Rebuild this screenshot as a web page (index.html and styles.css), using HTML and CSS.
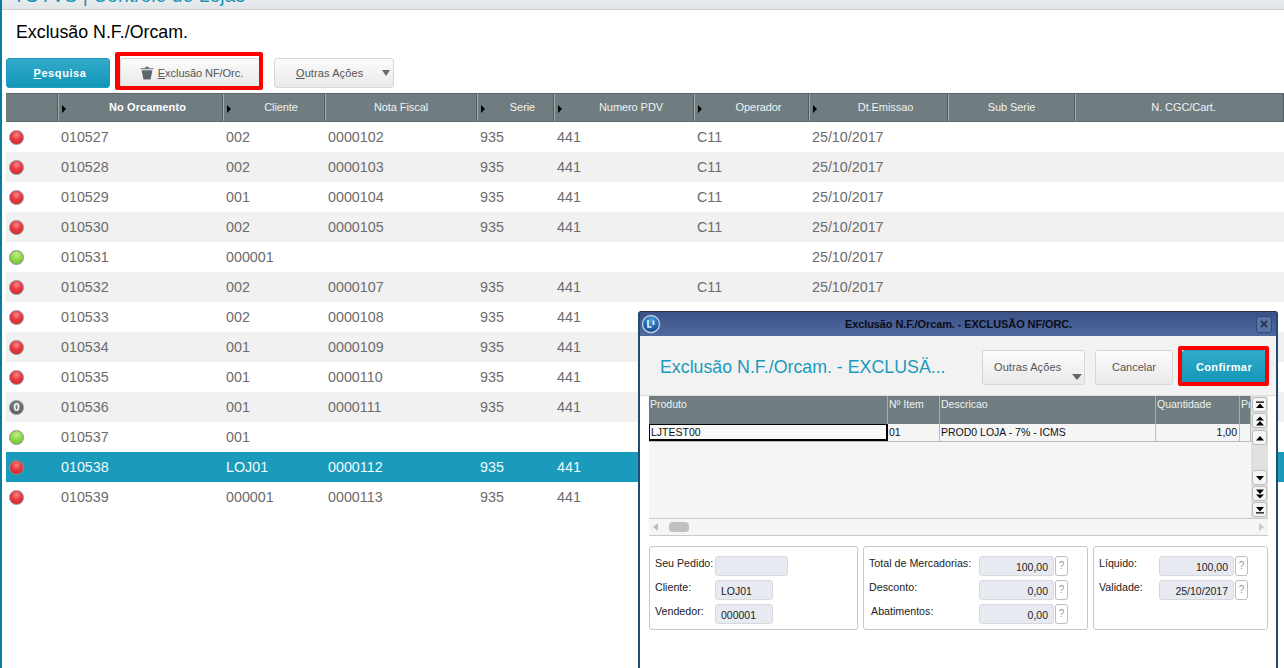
FILE: index.html
```html
<!DOCTYPE html>
<html lang="pt">
<head>
<meta charset="utf-8">
<title>Exclusão N.F./Orcam.</title>
<link rel="stylesheet" href="styles.css">
</head>
<body>
<div class="app">
  <div class="topbar"><span class="brand">TOTVS | Controle de Lojas</span></div>
  <main class="content">
    <h1 class="page-title">Exclusão N.F./Orcam.</h1>
    <div class="toolbar">
      <button class="btn btn-primary btn-search"><u>P</u>esquisa</button>
      <button class="btn btn-delete highlighted">
        <svg class="trash" viewBox="0 0 14 14" width="14" height="14"><path d="M0.5 2.2 L5 2.2 L5.4 0.8 L8.6 0.8 L9 2.2 L13.5 2.2 L13.5 3.2 L0.5 3.2 Z" fill="#6d7376"/><path d="M1.6 4.2 L12.4 4.2 L10.6 13.4 L3.4 13.4 Z" fill="#5f666a"/></svg>
        <span><u>E</u>xclusão NF/Orc.</span>
      </button>
      <button class="btn btn-more"><span><u>O</u>utras Ações</span><i class="caret"></i></button>
    </div>
    <div class="grid">
      <div class="row head">
        <div class="h"></div>
        <div class="h arrow strong">No Orcamento</div>
        <div class="h arrow">Cliente</div>
        <div class="h">Nota Fiscal</div>
        <div class="h arrow">Serie</div>
        <div class="h arrow">Numero PDV</div>
        <div class="h arrow">Operador</div>
        <div class="h arrow">Dt.Emissao</div>
        <div class="h">Sub Serie</div>
        <div class="h h-last">N. CGC/Cart.</div>
      </div>
      <div class="row"><div class="c"><i class="dot red"></i></div><div class="c">010527</div><div class="c">002</div><div class="c">0000102</div><div class="c">935</div><div class="c">441</div><div class="c">C11</div><div class="c">25/10/2017</div></div>
      <div class="row"><div class="c"><i class="dot red"></i></div><div class="c">010528</div><div class="c">002</div><div class="c">0000103</div><div class="c">935</div><div class="c">441</div><div class="c">C11</div><div class="c">25/10/2017</div></div>
      <div class="row"><div class="c"><i class="dot red"></i></div><div class="c">010529</div><div class="c">001</div><div class="c">0000104</div><div class="c">935</div><div class="c">441</div><div class="c">C11</div><div class="c">25/10/2017</div></div>
      <div class="row"><div class="c"><i class="dot red"></i></div><div class="c">010530</div><div class="c">002</div><div class="c">0000105</div><div class="c">935</div><div class="c">441</div><div class="c">C11</div><div class="c">25/10/2017</div></div>
      <div class="row"><div class="c"><i class="dot green"></i></div><div class="c">010531</div><div class="c">000001</div><div class="c"></div><div class="c"></div><div class="c"></div><div class="c"></div><div class="c">25/10/2017</div></div>
      <div class="row"><div class="c"><i class="dot red"></i></div><div class="c">010532</div><div class="c">002</div><div class="c">0000107</div><div class="c">935</div><div class="c">441</div><div class="c">C11</div><div class="c">25/10/2017</div></div>
      <div class="row"><div class="c"><i class="dot red"></i></div><div class="c">010533</div><div class="c">002</div><div class="c">0000108</div><div class="c">935</div><div class="c">441</div></div>
      <div class="row"><div class="c"><i class="dot red"></i></div><div class="c">010534</div><div class="c">001</div><div class="c">0000109</div><div class="c">935</div><div class="c">441</div></div>
      <div class="row"><div class="c"><i class="dot red"></i></div><div class="c">010535</div><div class="c">001</div><div class="c">0000110</div><div class="c">935</div><div class="c">441</div></div>
      <div class="row"><div class="c"><i class="dot zero">0</i></div><div class="c">010536</div><div class="c">001</div><div class="c">0000111</div><div class="c">935</div><div class="c">441</div></div>
      <div class="row"><div class="c"><i class="dot green"></i></div><div class="c">010537</div><div class="c">001</div></div>
      <div class="row selected"><div class="c"><i class="dot red"></i></div><div class="c">010538</div><div class="c">LOJ01</div><div class="c">0000112</div><div class="c">935</div><div class="c">441</div></div>
      <div class="row"><div class="c"><i class="dot red"></i></div><div class="c">010539</div><div class="c">000001</div><div class="c">0000113</div><div class="c">935</div><div class="c">441</div></div>
    </div>
  </main>
</div>

<section class="window">
  <header class="win-title">
    <svg class="win-logo" viewBox="0 0 20 20" width="20" height="20"><defs><radialGradient id="lg" cx="50%" cy="30%" r="70%"><stop offset="0" stop-color="#4aa6e0"/><stop offset="1" stop-color="#0c3f86"/></radialGradient></defs><circle cx="10" cy="10" r="8.5" fill="url(#lg)" stroke="#b9cfe2" stroke-width="1.4"/><path d="M7 6 V13 H10.5 M12.5 6.5 V11" fill="none" stroke="#eaf4fb" stroke-width="1.6"/></svg>
    <span class="win-caption">Exclusão N.F./Orcam. - EXCLUSÃO NF/ORC.</span>
    <button class="win-close"><svg viewBox="0 0 8 8" width="8" height="8"><path d="M1 1 7 7M7 1 1 7" stroke="#28344f" stroke-width="1.8" fill="none"/></svg></button>
  </header>
  <div class="win-head">
    <h2 class="win-heading">Exclusão N.F./Orcam. - EXCLUSÄ...</h2>
    <button class="btn btn-win-more">Outras Ações<i class="caret caret-corner"></i></button>
    <button class="btn btn-cancel">Cancelar</button>
    <button class="btn btn-primary btn-confirm">Confirmar</button>
  </div>
  <div class="browse">
    <div class="browse-main">
      <div class="b-row b-head"><div>Produto</div><div>Nº Item</div><div>Descricao</div><div>Quantidade</div><div>Pr</div></div>
      <div class="b-row b-data"><div class="b-focus">LJTEST00</div><div>01</div><div>PROD0 LOJA - 7% - ICMS</div><div class="num">1,00</div><div></div></div>
    </div>
    <div class="v-scroll">
      <div class="v-group">
        <button class="sb"><svg viewBox="0 0 10 10" width="10" height="10"><path d="M1 1.5H9V2.8H1ZM5 3.6 9 8H1Z"/></svg></button>
        <button class="sb"><svg viewBox="0 0 10 10" width="10" height="10"><path d="M5 .5 9 4.5H1ZM5 5 9 9.5H1Z"/></svg></button>
        <button class="sb sb-gap"><svg viewBox="0 0 10 10" width="10" height="10"><path d="M5 3 9 7.5H1Z"/></svg></button>
      </div>
      <div class="v-group">
        <button class="sb"><svg viewBox="0 0 10 10" width="10" height="10"><path d="M5 7.5 1 3H9Z"/></svg></button>
        <button class="sb"><svg viewBox="0 0 10 10" width="10" height="10"><path d="M5 5 1 .5H9ZM5 9.5 1 5.5H9Z"/></svg></button>
        <button class="sb"><svg viewBox="0 0 10 10" width="10" height="10"><path d="M5 6.4 1 2H9ZM1 7.2H9V8.5H1Z"/></svg></button>
      </div>
    </div>
  </div>
  <div class="h-scroll">
    <i class="h-left"></i><i class="h-thumb"></i><i class="h-right"></i>
  </div>
  <div class="panels">
    <div class="panel p-a">
      <span class="lbl">Seu Pedido:</span><span class="fld wide"></span>
      <span class="lbl">Cliente:</span><span class="fld">LOJ01</span>
      <span class="lbl">Vendedor:</span><span class="fld">000001</span>
    </div>
    <div class="panel p-b">
      <span class="lbl">Total de Mercadorias:</span><span class="fld right">100,00</span><span class="help">?</span>
      <span class="lbl">Desconto:</span><span class="fld right">0,00</span><span class="help">?</span>
      <span class="lbl indent">Abatimentos:</span><span class="fld right">0,00</span><span class="help">?</span>
    </div>
    <div class="panel p-c">
      <span class="lbl">Líquido:</span><span class="fld right">100,00</span><span class="help">?</span>
      <span class="lbl">Validade:</span><span class="fld right">25/10/2017</span><span class="help">?</span>
    </div>
  </div>
</section>
</body>
</html>
```

FILE: styles.css
```css
* { box-sizing: border-box; }
html, body { margin: 0; height: 100%; overflow: hidden; background: #fff; }
body { font-family: "Liberation Sans", Arial, sans-serif; color: #000; }
button { font-family: inherit; }

.app { height: 668px; border-left: 2px solid #0b7c9c; overflow: hidden; }
.topbar { height: 10px; background: linear-gradient(#e8ecee, #e1e6e8); border-bottom: 1px solid #c9cfd2; overflow: hidden; }
.brand { display: block; margin: -17px 0 0 11px; font-size: 19.4px; line-height: 24px; color: #1a93b5; white-space: nowrap; }

.content { padding-left: 4px; }
.page-title { margin: 0; height: 48px; padding: 11px 0 0 10px; font-size: 17.8px; line-height: 22px; font-weight: 400; color: #000; }

.toolbar { display: flex; height: 30px; margin-bottom: 5px; }
.btn { border: 1px solid #d6d6d6; border-radius: 3px; background: linear-gradient(#fbfbfb, #e9e9e9); color: #555; font-size: 11px; letter-spacing: .1px; padding: 0; height: 100%; }
.btn-primary { border: 1px solid #1b9dbf; background: linear-gradient(#33aac9, #1296b8); color: #fff; font-weight: 700; }
.btn-search { width: 104px; font-size: 11px; letter-spacing: .6px; margin-right: 10px; padding-left: 4px; }
.btn-delete { width: 140px; margin-right: 14px; position: relative; display: flex; align-items: center; justify-content: center; gap: 4px; padding-left: 3px; letter-spacing: -.05px; }
.btn-delete::after { content: ""; position: absolute; left: -6px; right: -4px; top: -7px; bottom: -3px; border: 4px solid #f00; border-left-width: 5px; border-radius: 2px; }
.btn-more { width: 120px; display: flex; align-items: center; padding-left: 21px; }
.caret { width: 0; height: 0; border-left: 4px solid transparent; border-right: 4px solid transparent; border-top: 6px solid #606a70; margin-left: 19px; }

.grid { width: 1278px; }
.row { display: grid; grid-template-columns: 52px 165px 102px 152px 77px 140px 115px 139px 127px 209px; height: 30px; background: #fff; }
.row:nth-child(odd) { background: #f1f1f1; }
.row.head { height: 29px; background: #6f7d80; border-top: 1px solid #5f6b6e; border-bottom: 1px solid #59666a; }
.h { border-left: 1px solid #a4adaf; border-right: 1px solid #4f5b5f; color: #f0f3f3; font-size: 11px; letter-spacing: -.08px; display: flex; align-items: center; justify-content: center; position: relative; padding-bottom: 2px; }
.h:first-child { border-left: 0; }
.h.arrow { padding-left: 14px; }
.h.arrow::before { content: ""; position: absolute; left: 3px; top: 11px; border-top: 4px solid transparent; border-bottom: 4px solid transparent; border-left: 4px solid #000; }
.h.strong { font-weight: 700; color: #fff; letter-spacing: .1px; }
.h-last { padding-left: 8px; }
.c { font-size: 14.3px; line-height: 30px; color: #6c6c6c; padding-left: 3px; white-space: nowrap; }
.c:first-child { padding-left: 3px; display: flex; align-items: center; }
.selected { background: #1a9bbc !important; }
.selected .c { color: #f3f9fb; }

.dot { display: block; width: 15px; height: 15px; border-radius: 50%; border: 1px solid #909090; font-style: normal; }
.dot.red { background: radial-gradient(circle at 50% 30%, #f78a8a 0, #ec3c42 40%, #c81e26 100%); }
.dot.green { background: radial-gradient(circle at 50% 30%, #c3ee8e 0, #8fd948 45%, #63b82a 100%); }
.dot.zero { background: radial-gradient(circle at 50% 30%, #8a8a8a 0, #666 60%, #5a5a5a 100%); color: #fff; font-size: 11px; font-weight: 700; line-height: 13px; text-align: center; }

.window { position: absolute; left: 638px; top: 311px; width: 640px; height: 357px; background: #fff; border: 2px solid #1f4b75; border-bottom: 0; border-top: 1px solid #2a2f40; border-radius: 3px 3px 0 0; display: flex; flex-direction: column; }
.win-title { height: 24px; flex: none; background: linear-gradient(#3c5287, #4f6aa0); display: flex; align-items: center; padding: 0 4px 0 1px; }
.win-logo { flex: none; }
.win-caption { flex: 1; text-align: center; font-size: 11px; font-weight: 700; color: #0c0c18; letter-spacing: -.1px; }
.win-close { width: 16px; height: 17px; padding: 0; border: 1px solid #2f4876; border-radius: 3px; background: #5873a6; display: flex; align-items: center; justify-content: center; }

.win-head { height: 60px; flex: none; background: #f2f2f2; display: flex; align-items: flex-start; padding: 14px 10px 0 20px; border-bottom: 1px solid #ddd; }
.win-heading { margin: 0 auto 0 0; font-size: 17.8px; line-height: 34px; font-weight: 400; color: #1a9bbc; white-space: nowrap; }
.win-head .btn { height: 35px; padding-bottom: 2px; }
.btn-win-more { width: 103px; margin-right: 10px; position: relative; text-align: left; padding-left: 11px; }
.caret-corner { position: absolute; right: 2px; bottom: 4px; margin: 0; border-left-width: 5px; border-right-width: 5px; }
.btn-cancel { width: 78px; margin-right: 9px; letter-spacing: 0; }
.btn-confirm { width: 84px; position: relative; letter-spacing: .4px; }
.btn-confirm::after { content: ""; position: absolute; inset: -5px -4px -2px -5px; border: 4px solid #f00; border-radius: 2px; }

.browse { height: 123px; flex: none; margin: 0 8px 0 9px; background: #f5f5f5; display: flex; border-bottom: 1px solid #c9c9c9; }
.browse-main { flex: 1; }
.b-row { display: grid; grid-template-columns: 239px 52px 216px 84px 11px; font-size: 10.5px; color: #111; }
.b-row > div { overflow: hidden; white-space: nowrap; }
.b-head { height: 28px; background: #6f7d80; color: #eef2f2; }
.b-head > div { padding: 2px 0 0 1px; border-right: 1px solid #a4adaf; }
.b-data { height: 18px; line-height: 16px; border-bottom: 1px solid #bbb; }
.b-data > div { padding-left: 1px; border-right: 1px solid #bdbdbd; }
.b-data .b-focus { border: 1px solid #000; border-bottom-width: 2px; border-right-width: 2px; background: #fafafa; line-height: 14px; }
.b-data .num { text-align: right; padding-right: 2px; }

.v-scroll { width: 17px; flex: none; background: #e0e0e0; display: flex; flex-direction: column; justify-content: space-between; align-items: center; padding: 1px 0 1px; }
.v-group { display: flex; flex-direction: column; gap: 1px; }
.sb { width: 15px; height: 15px; padding: 0; border: 1px solid #bcbcbc; border-radius: 3px; background: #f5f5f5; display: flex; align-items: center; justify-content: center; }
.sb svg { fill: #000; }
.sb-gap { margin-top: 1px; }

.h-scroll { height: 17px; flex: none; margin: 0 8px 0 9px; display: flex; align-items: center; background: #f5f5f5; border-bottom: 1px solid #c9c9c9; padding: 0 4px; }
.h-left { border-top: 4px solid transparent; border-bottom: 4px solid transparent; border-right: 5px solid #bdbdbd; margin-right: 11px; }
.h-thumb { width: 20px; height: 10px; border-radius: 4px; background: #c0c0c0; }
.h-right { border-top: 4px solid transparent; border-bottom: 4px solid transparent; border-left: 5px solid #c8c8c8; margin-left: auto; }

.panels { display: flex; gap: 5px; margin: 10px 8px 0 9px; height: 84px; }
.panel { border: 1px solid #c8c8c8; border-radius: 3px; background: #fff; display: grid; grid-auto-rows: 20px; row-gap: 4px; padding: 9px 0 0 5px; align-items: stretch; font-size: 10.7px; color: #222; }
.p-a { width: 209px; grid-template-columns: 60px max-content; }
.p-b { width: 225px; grid-template-columns: 110px 75px 13px; }
.p-c { width: 175px; grid-template-columns: 60px 75px 13px; }
.lbl { line-height: 14px; white-space: nowrap; }
.indent { padding-left: 2px; }
.fld { width: 58px; background: #e7eaf0; border: 1px solid #d6d8dc; border-radius: 3px; line-height: 20px; padding: 0 5px; font-size: 10.5px; color: #222; white-space: nowrap; }
.fld.wide { width: 73px; }
.fld.right { width: 75px; text-align: right; }
.help { width: 13px; margin-left: 1px; border: 1px solid #bdbdbd; border-radius: 3px; color: #999; text-align: center; line-height: 18px; font-size: 10px; }
```
